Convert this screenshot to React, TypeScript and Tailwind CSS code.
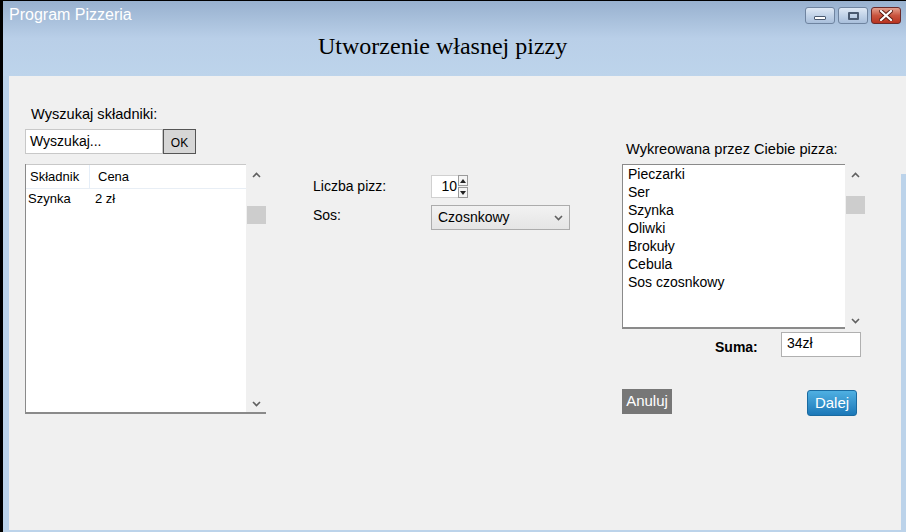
import React from 'react';

const ingredients = ['Pieczarki', 'Ser', 'Szynka', 'Oliwki', 'Brokuły', 'Cebula', 'Sos czosnkowy'];

const ChevronUp = () => (
  <svg width="9" height="6" viewBox="0 0 9 6" className="block">
    <path d="M1 5 L4.5 1.5 L8 5" fill="none" stroke="#606060" strokeWidth="1.6" />
  </svg>
);

const ChevronDown = () => (
  <svg width="9" height="6" viewBox="0 0 9 6" className="block">
    <path d="M1 1 L4.5 4.5 L8 1" fill="none" stroke="#606060" strokeWidth="1.6" />
  </svg>
);

const ScrollTrack = ({ thumbTop }: { thumbTop: number }) => (
  <div className="w-[20px] bg-[#f0f0f0] flex flex-col items-center">
    <div className="pt-[8px]"><ChevronUp /></div>
    <div className="w-[19px] h-[18px] bg-[#cdcdcd]" style={{ marginTop: thumbTop }} />
    <div className="flex-1" />
    <div className="pb-[5px]"><ChevronDown /></div>
  </div>
);

const WinButton = ({ kind }: { kind: 'min' | 'max' | 'close' }) => {
  const isClose = kind === 'close';
  return (
    <div
      className={`w-[30px] h-[17px] rounded-[3px] border flex items-center justify-center ${
        isClose
          ? 'border-[#6b2a2a] bg-gradient-to-b from-[#e3a08f] via-[#c9553f] to-[#b8321f]'
          : 'border-[#6f84a0] bg-gradient-to-b from-[#dfe9f5] via-[#c2d3e8] to-[#a9bfdb]'
      }`}
    >
      {kind === 'min' && <div className="w-[12px] h-[4px] mt-[4px] bg-white border border-[#4a5a70] rounded-[1px]" />}
      {kind === 'max' && <div className="w-[11px] h-[8px] bg-transparent border-[2px] border-[#4a5a70] rounded-[1px]" />}
      {kind === 'close' && (
        <svg width="14" height="11" viewBox="0 0 14 11">
          <path d="M2 1 L12 10 M12 1 L2 10" stroke="#5a1a10" strokeWidth="4" strokeLinecap="square" />
          <path d="M2 1 L12 10 M12 1 L2 10" stroke="#ffffff" strokeWidth="2.2" strokeLinecap="square" />
        </svg>
      )}
    </div>
  );
};

export default function App() {
  return (
    <div className="w-[906px] h-[532px] overflow-hidden bg-[#bcd3ea] border-t border-black font-['Liberation_Sans',Arial,sans-serif] text-[14px] text-black flex flex-col">
      {/* title bar */}
      <div className="h-[75px] border-l-[3px] border-black bg-gradient-to-b from-[#98b1cf] via-[#b9cfe8] to-[#bdd4eb] flex flex-col">
        <div className="flex items-start justify-between pl-[6px] pr-[5px] pt-[5px]">
          <span className="text-white text-[16px] leading-[18px]">Program Pizzeria</span>
          <div className="flex gap-[3px] pt-[1px]">
            <WinButton kind="min" />
            <WinButton kind="max" />
            <WinButton kind="close" />
          </div>
        </div>
        <div className="pl-[315px] pt-[8px] font-['Liberation_Serif','Times_New_Roman',serif] text-[24px] leading-[28px]">
          Utworzenie własnej pizzy
        </div>
      </div>

      {/* body */}
      <div className="flex-1 flex border-l-[3px] border-black pl-[6px] pb-[2px]">
        <div className="flex-1 bg-[#f0f0f0] flex pl-[16px]">
          {/* left column */}
          <div className="w-[241px] flex flex-col pt-[30px]">
            <div className="pl-[6px] leading-[16px] text-[14.6px]">Wyszukaj składniki:</div>
            <div className="flex mt-[7px]">
              <div className="w-[138px] h-[25px] bg-white border border-[#c8c8c8] pl-[4px] leading-[23px]">Wyszukaj...</div>
              <div className="w-[33px] h-[25px] bg-[#d6d6d6] border-[1.5px] border-[#555] flex items-center justify-center text-[12px] pt-[2px]">OK</div>
            </div>
            <div className="mt-[10px] h-[250px] flex border-l border-b-[2px] border-[#8a8a8a]">
              <div className="flex-1 bg-white border-t border-[#c8c8c8]">
                <div className="flex h-[24px] items-center border-b border-[#e8eef5] text-[13px]">
                  <div className="w-[64px] pl-[4px] h-full flex items-center border-r border-[#e5eef8]">Składnik</div>
                  <div className="pl-[8px]">Cena</div>
                </div>
                <div className="flex text-[13px] leading-[18px] pt-[1px]">
                  <div className="w-[69px] pl-[2px]">Szynka</div>
                  <div>2 zł</div>
                </div>
              </div>
              <ScrollTrack thumbTop={28} />
            </div>
          </div>

          {/* middle column */}
          <div className="w-[257px] ml-[47px] pt-[99px] flex flex-col gap-[7px]">
            <div className="flex items-center">
              <div className="w-[118px] leading-[16px] mt-[-1px]">Liczba pizz:</div>
              <div className="w-[27px] h-[23px] bg-white border border-[#d0d0d0] border-r-0 flex items-center justify-end pr-[1px]">10</div>
              <div className="flex flex-col gap-[1px]">
                <div className="w-[10px] h-[11px] bg-[#f4f4f4] border border-[#9a9a9a] flex items-center justify-center">
                  <svg width="6" height="4" viewBox="0 0 6 4"><path d="M0 4 L3 0 L6 4 Z" fill="#222" /></svg>
                </div>
                <div className="w-[10px] h-[11px] bg-[#f4f4f4] border border-[#9a9a9a] flex items-center justify-center">
                  <svg width="6" height="4" viewBox="0 0 6 4"><path d="M0 0 L3 4 L6 0 Z" fill="#222" /></svg>
                </div>
              </div>
            </div>
            <div className="flex items-start">
              <div className="w-[118px] leading-[16px] pt-[2px]">Sos:</div>
              <div className="w-[139px] h-[25px] bg-gradient-to-b from-[#f2f2f2] to-[#e5e5e5] border border-[#acacac] flex items-center justify-between pl-[6px] pr-[6px]">
                <span>Czosnkowy</span>
                <ChevronDown />
              </div>
            </div>
          </div>

          {/* right column */}
          <div className="w-[243px] ml-[52px] pt-[65px] flex flex-col">
            <div className="pl-[4px] leading-[16px] text-[14.6px] whitespace-nowrap">Wykreowana przez Ciebie pizza:</div>
            <div className="mt-[7px] h-[165px] flex">
              <div className="w-[223px] bg-white border-l border-t border-b-[2px] border-[#8a8a8a] pl-[5px] leading-[18px]">
                {ingredients.map((item) => (
                  <div key={item}>{item}</div>
                ))}
              </div>
              <ScrollTrack thumbTop={18} />
            </div>
            <div className="flex items-center mt-[3px]">
              <div className="w-[93px] ml-[93px] font-bold leading-[16px] mt-[4px]">Suma:</div>
              <div className="w-[80px] h-[25px] bg-white border border-[#b0b0b0] pl-[5px] leading-[20px] ml-[-27px]">34zł</div>
            </div>
            <div className="flex justify-between items-start mt-[32px] pr-[8px]">
              <div className="w-[50px] h-[25px] bg-[#777] text-white text-[15px] flex items-center justify-center">Anuluj</div>
              <div className="w-[50px] h-[26px] mt-[1px] rounded-[3px] border border-[#1a6aa0] bg-gradient-to-b from-[#4fb0e2] to-[#1b78b8] text-white text-[15px] flex items-center justify-center">Dalej</div>
            </div>
          </div>
        </div>
        <div className="w-[5px] flex flex-col">
          <div className="h-[98px] bg-[#f0f0f0]" />
        </div>
      </div>
    </div>
  );
}
